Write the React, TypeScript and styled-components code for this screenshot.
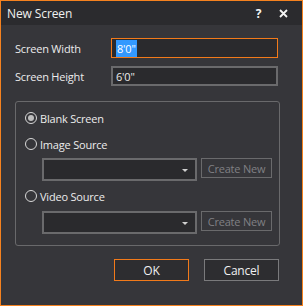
import React from 'react';
import styled, { createGlobalStyle } from 'styled-components';

const GlobalStyle = createGlobalStyle`
  html, body {
    margin: 0;
    padding: 0;
    background: #36363a;
  }
  * {
    box-sizing: border-box;
  }
`;

const Window = styled.div`
  width: 303px;
  height: 306px;
  border: 1px solid #f5821f;
  background: #36363a;
  font-family: "Open Sans", "Noto Sans", sans-serif;
  font-size: 11px;
  letter-spacing: -0.2px;
  color: #ececec;
  display: flex;
  flex-direction: column;
`;

const TitleBar = styled.div`
  height: 24px;
  background: #2b2b2e;
  display: flex;
  align-items: center;
  padding: 0 6px 0 6px;
`;

const Title = styled.div`
  flex: 1;
  font-size: 12px;
  letter-spacing: -0.1px;
  color: #f0f0f0;
`;

const TitleButton = styled.div`
  width: 25px;
  text-align: center;
  font-weight: 700;
  font-size: 12px;
  color: #f4f4f4;
  display: flex;
  justify-content: center;
  align-items: center;
`;

const Body = styled.div`
  padding: 13px 23px 0 13px;
  display: flex;
  flex-direction: column;
`;

const FieldRow = styled.div`
  display: flex;
  align-items: center;
  height: 20px;
  margin-bottom: 8px;
`;

const FieldLabel = styled.div`
  width: 97px;
  padding-left: 1px;
`;

const TextInput = styled.div<{ $focused?: boolean }>`
  width: 167px;
  height: 20px;
  border: ${({ $focused }) => ($focused ? '1px solid #f27a1a' : '2px solid #6a6a6c')};
  background: #2a2a2d;
  display: flex;
  align-items: center;
  padding-left: ${({ $focused }) => ($focused ? '4px' : '3px')};
`;

const Selected = styled.span`
  background: #3399ff;
  color: #ffffff;
  padding: 1px 1px;
`;

const Group = styled.div`
  margin-top: 7px;
  margin-left: 1px;
  width: 265px;
  height: 145px;
  border: 1px solid #69696b;
  border-radius: 3px;
  padding: 9px 0 0 9px;
  display: flex;
  flex-direction: column;
`;

const RadioRow = styled.div<{ $gap: number }>`
  display: flex;
  align-items: center;
  height: 14px;
  margin-bottom: ${({ $gap }) => $gap}px;
`;

const RadioCircle = styled.span<{ $checked?: boolean }>`
  width: 12px;
  height: 12px;
  border-radius: 50%;
  border: 1px solid #d8d8d8;
  margin-right: 3px;
  display: flex;
  align-items: center;
  justify-content: center;
  &::after {
    content: '';
    width: 6px;
    height: 6px;
    border-radius: 50%;
    background: ${({ $checked }) => ($checked ? '#bdbdbd' : 'transparent')};
  }
`;

const SourceRow = styled.div`
  display: flex;
  align-items: flex-start;
  margin-left: 17px;
  margin-bottom: 8px;
`;

const Combo = styled.div`
  width: 155px;
  height: 23px;
  border: 2px solid #6a6a6c;
  background: #2a2a2d;
  display: flex;
  align-items: center;
  justify-content: flex-end;
  padding-right: 7px;
`;

const ComboArrow = styled.span`
  width: 0;
  height: 0;
  border-left: 3px solid transparent;
  border-right: 3px solid transparent;
  border-top: 3px solid #d0d0d0;
  margin-top: 2px;
`;

const CreateButton = styled.div`
  margin-left: 4px;
  width: 71px;
  height: 20px;
  border: 1px solid #6a6a6c;
  color: #808084;
  display: flex;
  align-items: center;
  justify-content: center;
`;

const Footer = styled.div`
  display: flex;
  justify-content: flex-end;
  gap: 15px;
  margin-top: 13px;
`;

const DialogButton = styled.div<{ $primary?: boolean }>`
  width: 75px;
  height: 22px;
  border: 1px solid ${({ $primary }) => ($primary ? '#f27a1a' : '#7a7a7c')};
  background: #2d2d30;
  display: flex;
  align-items: center;
  justify-content: center;
  color: #f0f0f0;
  font-size: 12px;
`;

export default function App() {
  return (
    <>
      <GlobalStyle />
      <Window>
        <TitleBar>
          <Title>New Screen</Title>
          <TitleButton>?</TitleButton>
          <TitleButton>
            <svg width="9" height="9" viewBox="0 0 9 9">
              <path d="M1 1 L8 8 M8 1 L1 8" stroke="#f4f4f4" strokeWidth="1.8" />
            </svg>
          </TitleButton>
        </TitleBar>
        <Body>
          <FieldRow>
            <FieldLabel>Screen Width</FieldLabel>
            <TextInput $focused>
              <Selected>8'0"</Selected>
            </TextInput>
          </FieldRow>
          <FieldRow>
            <FieldLabel>Screen Height</FieldLabel>
            <TextInput>6'0"</TextInput>
          </FieldRow>
          <Group>
            <RadioRow $gap={12}>
              <RadioCircle $checked />
              Blank Screen
            </RadioRow>
            <RadioRow $gap={7}>
              <RadioCircle />
              Image Source
            </RadioRow>
            <SourceRow>
              <Combo>
                <ComboArrow />
              </Combo>
              <CreateButton>Create New</CreateButton>
            </SourceRow>
            <RadioRow $gap={8}>
              <RadioCircle />
              Video Source
            </RadioRow>
            <SourceRow>
              <Combo>
                <ComboArrow />
              </Combo>
              <CreateButton>Create New</CreateButton>
            </SourceRow>
          </Group>
          <Footer>
            <DialogButton $primary>OK</DialogButton>
            <DialogButton>Cancel</DialogButton>
          </Footer>
        </Body>
      </Window>
    </>
  );
}
